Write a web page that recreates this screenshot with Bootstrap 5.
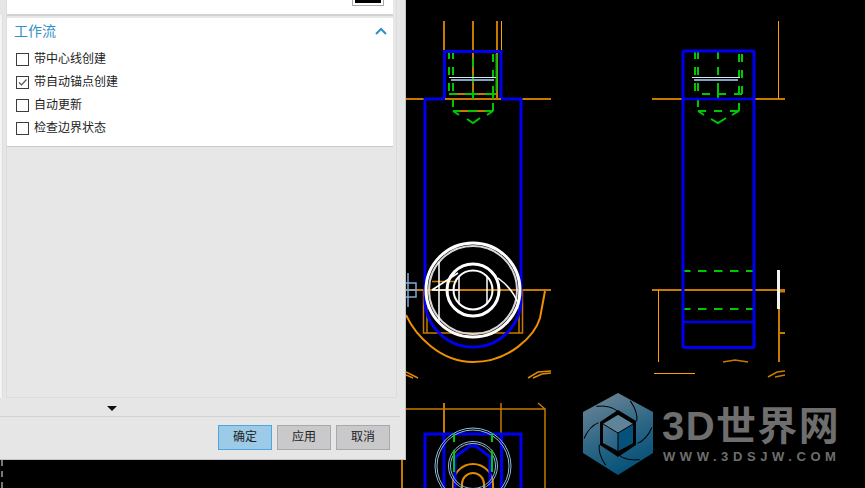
<!DOCTYPE html>
<html lang="zh">
<head>
<meta charset="utf-8">
<title>工作流</title>
<link href="https://cdn.jsdelivr.net/npm/bootstrap@5.3.0/dist/css/bootstrap.min.css" rel="stylesheet">
<style>
html,body{margin:0;height:488px;overflow:hidden;background:#000;font-family:"Liberation Sans","Noto Sans CJK SC",sans-serif}
.stage{width:865px;height:488px;background:#000}
.left-col{width:406px;height:488px;flex:none}
.dlg{width:406px;height:460px;background:#e6e6e6;border-right:1px solid #c4c4c4;border-bottom:1px solid #c4c4c4}
.upper{height:398px;flex:none}
.edge{width:3px;margin-right:3px;background:#f4f4f4;border-right:1px solid #dedede;flex:none;margin-top:15px}
.frame{width:391px;border:1px solid #dcdcdc;border-top:0;padding-right:3px;background:#e7e7e7;flex:none}
.sec-top{height:16px;background:#fff;border-bottom:2px solid #d2d2d2;position:relative;flex:none}
.swatch{position:absolute;left:345px;top:-2px;width:32px;height:8px;border:1px solid #a9a9a9;padding:0 2px 2px;background:#fff}
.swatch span{display:block;height:100%;background:#000}
.sec-flow{background:#fff;margin-top:2px;height:129px;border-bottom:1px solid #cacaca;padding:0 6px 0 7px;flex:none}
.sec-head{height:30px;color:#2f8fc6;font-size:14px;line-height:27px}
.chev{margin-top:9px}
.opt{height:23px;font-size:12px;color:#1c1c1c;line-height:23px;gap:5px;margin-left:2px}
.opt-box{width:13px;height:13px;border:1px solid #3c3c3c;background:#fff;flex:none;display:block}
.grip{height:18px;flex:none;padding-left:107px;padding-top:8px}
.tri{display:block;width:0;height:0;border-left:5px solid transparent;border-right:5px solid transparent;border-top:5px solid #111}
.foot{border-top:1px solid #d2d2d2;width:400px;padding:8px 10px 0 0;gap:5px;flex:none}
.act{width:54px;height:25px;background:#c9c9cc;border:1px solid #a9a9a9;border-radius:0;font-size:12px;color:#222;padding:0;line-height:23px}
.act-main{background:#9ccbe8;border-color:#4ea6da}
.strip{height:28px;width:402px;margin-left:1px;border-left:2px dashed #777;border-right:2px solid #c87a00}
.cad{position:relative;width:459px;height:488px;flex:none}
.cad svg{display:block}
.logo-big{position:absolute;left:256px;top:404px;font-size:40px;line-height:44px;font-weight:700;color:#6e6e6e;letter-spacing:1.4px;white-space:nowrap}
.logo-url{position:absolute;left:257px;top:449px;font-size:13px;line-height:15px;font-weight:700;color:#6e6e6e;letter-spacing:4.6px;white-space:nowrap}
</style>
</head>
<body>
<div class="stage d-flex">
  <div class="left-col d-flex flex-column">
    <div class="dlg d-flex flex-column">
      <div class="upper d-flex">
        <div class="edge"></div>
        <div class="frame d-flex flex-column">
          <div class="sec-top"><div class="swatch"><span></span></div></div>
          <div class="sec-flow">
            <div class="sec-head d-flex justify-content-between align-items-start">
              <span>工作流</span>
              <svg class="chev" width="12" height="8" viewBox="0 0 12 8"><path d="M1 7 6 2l5 5" fill="none" stroke="#2f8fc6" stroke-width="2"/></svg>
            </div>
            <div class="opt d-flex align-items-center"><span class="opt-box"></span><span>带中心线创建</span></div>
            <div class="opt d-flex align-items-center"><span class="opt-box"><svg width="11" height="11" viewBox="0 0 11 11" class="d-block"><path d="M2 5.500 4.500 8 9.500 2.500" fill="none" stroke="#555" stroke-width="1.200"/></svg></span><span>带自动锚点创建</span></div>
            <div class="opt d-flex align-items-center"><span class="opt-box"></span><span>自动更新</span></div>
            <div class="opt d-flex align-items-center"><span class="opt-box"></span><span>检查边界状态</span></div>
          </div>
        </div>
      </div>
      <div class="grip"><span class="tri"></span></div>
      <div class="foot d-flex justify-content-end">
        <button type="button" class="btn act act-main">确定</button>
        <button type="button" class="btn act">应用</button>
        <button type="button" class="btn act">取消</button>
      </div>
    </div>
    <div class="strip"></div>
  </div>
  <div class="cad">
    <svg width="459" height="488" viewBox="406 0 459 488" fill="none" stroke-linecap="butt">
      <defs>
        <linearGradient id="hexg" x1="0.25" y1="0" x2="0.65" y2="1"><stop offset="0" stop-color="#6a8494"/><stop offset="0.55" stop-color="#2a6585"/><stop offset="1" stop-color="#004f78"/></linearGradient>
        <linearGradient id="cubeg" x1="0" y1="0" x2="1" y2="1"><stop offset="0" stop-color="#587c91"/><stop offset="1" stop-color="#0a5680"/></linearGradient>
      </defs>

      <!-- first view: orange -->
      <g stroke="#c87a00">
        <path stroke-width="2" d="M444 21V51M473 21V99M406 99H551M497 21V99M406 290H551M449 94H496M453 111H493"/>
        <path stroke-width="1" stroke="#ffa000" d="M501.500 21V51"/>
        <path stroke-width="1.500" d="M423.500 290V333H522.500V290M427 290V333M519 290V333M432 281.500H457"/>
        <path stroke-width="2" stroke="#ee9000" d="M406 315C415 335 440 362 473 362C510 362 535 335 540 318L545 291"/>
        <path stroke-width="1.500" stroke="#e08a00" d="M406 372 418 378M406 375 413 378M528 378 538 372 551 371M533 378 542 374 551 373"/>
      </g>
      <!-- first view: green -->
      <g stroke="#00c800" stroke-width="2">
        <path stroke-dasharray="8 8" d="M449 51V91M453 51V91"/>
        <path d="M453 100V107M493 54V62M493 70V78M493 86V99M493 103V111M496.500 54V91M473 59V67M473 75V83M473 91V99"/>
        <path d="M449 94H457M465 94H477M485 94H496M453 111H460M468 111H477M485 111H493"/>
        <path d="M453 111 459 115M493 111 487 115M467 119 473 123 480 118"/>
      </g>
      <path stroke="#d8e8f0" stroke-width="1" d="M449 77.500H496"/>
      <path stroke="#7fa3c4" stroke-width="2" d="M451 80H494"/>
      <!-- first view: blue -->
      <path stroke="#0000f0" stroke-width="3" d="M444.500 98V51.500H501V98M425 99H445M501 99H521M425 98V299A48 48 0 0 0 521 299V98"/>
      <!-- first view: white circles -->
      <g stroke="#fff">
        <circle cx="473" cy="290" r="47" stroke-width="3"/>
        <circle cx="473" cy="290" r="44" stroke="#d8d8d8" stroke-width="2"/>
        <circle cx="473" cy="290" r="26" stroke-width="3"/>
        <circle cx="473" cy="290" r="19.500" stroke-width="2"/>
        <path stroke-width="1.500" d="M459 276V304M487 276V304M439 262V322M432 290H458M432 290 458 273M498 278Q512 288 518 303"/>
      </g>
      <path stroke="#7fa9d6" stroke-width="1.500" d="M408 273V307M406 283H416V297H406M406 290H416"/>

      <!-- second view -->
      <g stroke="#c87a00">
        <path stroke-width="2" d="M652 99H785M652 290H785M779 290V362M780 291.500H785M779 333H785"/>
        <path stroke-width="1" stroke="#ffa000" d="M778.500 21V99M658.500 290V362M654 373.500H695"/>
        <path stroke-width="1.500" d="M723 362 735 360 748 362M768 377 777 372 785 371M775 377 785 375"/>
      </g>
      <g stroke="#00c800" stroke-width="2">
        <path stroke-dasharray="8 8" d="M695 51V91M698 51V91M739 54V94M742 54V94"/>
        <path d="M698 99V107M739 103V111M718 52V59M718 67V75M718 83V99"/>
        <path d="M702 94H710M718 94H726M734 94H742M698 111H706M714 111H722M730 111H739"/>
        <path d="M698 111 704 115M739 111 732 115M711 119 718 123 726 118"/>
        <path stroke-dasharray="8.500 7.500" d="M682 271H755M682 309H755"/>
      </g>
      <path stroke="#d8e8f0" stroke-width="1" d="M692 77.500H740"/>
      <path stroke="#7fa3c4" stroke-width="2" d="M694 80H738"/>
      <rect x="683" y="51" width="71" height="296.500" rx="1.500" stroke="#0000f0" stroke-width="3"/>
      <path stroke="#0000f0" stroke-width="2.500" d="M683 99H754M683 322H754"/>
      <path stroke="#f2f2f2" stroke-width="3" d="M778.500 270V309"/>

      <!-- third view -->
      <g stroke="#c87a00">
        <path stroke-width="1.500" d="M406 409H545V488M538 403 545 409M501 403V434"/>
        <path stroke-width="2" d="M444 403V434"/>
        <path stroke-width="2" stroke="#e08a00" d="M453 488V484A20 20 0 0 1 493 484V488M462 488V484A11 11 0 0 1 484 484V488"/>
      </g>
      <g stroke="#0000f0" stroke-width="3">
        <path d="M425 488V434H521V488M444 434V488M501.500 434V488"/>
        <path d="M455 488V457L470 446H476L490 457V488"/>
      </g>
      <g stroke="#8fbde0" stroke-width="1">
        <circle cx="473" cy="466" r="38"/><circle cx="473" cy="466" r="36"/>
        <circle cx="473" cy="466" r="24.500"/><circle cx="473" cy="466" r="22.500"/>
      </g>
      <path stroke="#00c800" stroke-width="2" d="M454 433V442M492 433V442M454 450V472M492 450V472"/>

      <!-- logo -->
      <path fill="url(#hexg)" d="M618 393 653 412V453L618 475 583 453V412Z"/>
      <g stroke="#000" stroke-width="1">
        <path d="M596.300 406.300Q610 405 617.300 411"/>
        <path transform="rotate(60 618 433)" d="M596.300 406.300Q610 405 617.300 411"/>
        <path transform="rotate(120 618 433)" d="M596.300 406.300Q610 405 617.300 411"/>
        <path transform="rotate(180 618 433)" d="M596.300 406.300Q610 405 617.300 411"/>
        <path transform="rotate(240 618 433)" d="M596.300 406.300Q610 405 617.300 411"/>
        <path transform="rotate(300 618 433)" d="M596.300 406.300Q610 405 617.300 411"/>
      </g>
      <path fill="#000" d="M618 410 636 421V445L618 457 600 445V422Z"/>
      <path fill="url(#cubeg)" d="M618 415 633 424V443L618 451 603 443V424Z"/>
      <path fill="#5f8499" d="M618 415 633 424 618 433 603 424Z"/>
      <path fill="#04527c" d="M618 433 633 424V443L618 451Z"/>
      <path stroke="#000" stroke-width="1" d="M603 424 618 433 633 424M618 433V451"/>
    </svg>
    <div class="logo-big">3D世界网</div>
    <div class="logo-url">WWW.3DSJW.COM</div>
  </div>
</div>
</body>
</html>
